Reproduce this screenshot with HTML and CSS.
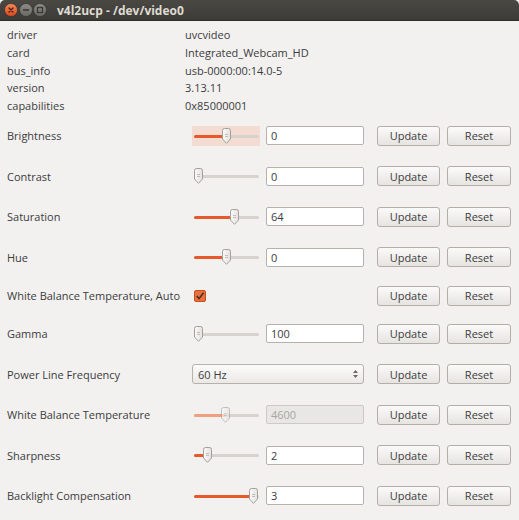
FILE: index.html
```html
<!DOCTYPE html>
<html lang="en">
<head>
    <meta charset="UTF-8">
    <title>v4l2ucp - /dev/video0</title>
    <link rel="stylesheet" href="styles.css">
</head>
<body>
    <div class="window">
        <div class="titlebar">
            <div class="wm-buttons">
                <svg class="wm-btn" width="14" height="14" viewBox="0 0 14 14">
                    <defs>
                        <linearGradient id="gClose" x1="0" y1="0" x2="0" y2="1">
                            <stop offset="0" stop-color="#f68a5c"/>
                            <stop offset="1" stop-color="#d9481a"/>
                        </linearGradient>
                    </defs>
                    <circle cx="7" cy="7" r="6.5" fill="url(#gClose)" stroke="#2c2b28" stroke-width="0.6"/>
                    <path d="M5 5 L9 9 M9 5 L5 9" stroke="#4a2414" stroke-width="1.4" stroke-linecap="round"/>
                </svg>
                <svg class="wm-btn" width="14" height="14" viewBox="0 0 14 14">
                    <defs>
                        <linearGradient id="gGrey" x1="0" y1="0" x2="0" y2="1">
                            <stop offset="0" stop-color="#8e8c86"/>
                            <stop offset="1" stop-color="#6a6863"/>
                        </linearGradient>
                    </defs>
                    <circle cx="7" cy="7" r="6.5" fill="url(#gGrey)" stroke="#2c2b28" stroke-width="0.6"/>
                    <path d="M4 7 H10" stroke="#3a3935" stroke-width="1.6"/>
                </svg>
                <svg class="wm-btn" width="14" height="14" viewBox="0 0 14 14">
                    <circle cx="7" cy="7" r="6.5" fill="url(#gGrey)" stroke="#2c2b28" stroke-width="0.6"/>
                    <rect x="4.5" y="4.5" width="5" height="5" fill="none" stroke="#3a3935" stroke-width="1.3"/>
                </svg>
            </div>
            <span class="title">v4l2ucp - /dev/video0</span>
        </div>

        <div class="content">
            <div class="info">
                <span>driver</span><span>uvcvideo</span>
                <span>card</span><span>Integrated_Webcam_HD</span>
                <span>bus_info</span><span>usb-0000:00:14.0-5</span>
                <span>version</span><span>3.13.11</span>
                <span>capabilities</span><span>0x85000001</span>
            </div>

            <div class="controls">
                <!-- Brightness -->
                <div class="row">
                    <span class="label">Brightness</span>
                    <div class="value">
                        <div class="slider hover">
                            <div class="track"><div class="fill" style="width:32px"></div></div>
                            <svg class="handle" style="left:34px" width="9" height="16" viewBox="0 0 9 16"><use href="#knob"/></svg>
                        </div>
                        <div class="field">0</div>
                    </div>
                    <button class="btn update">Update</button>
                    <button class="btn reset">Reset</button>
                </div>
                <!-- Contrast -->
                <div class="row">
                    <span class="label">Contrast</span>
                    <div class="value">
                        <div class="slider">
                            <div class="track"><div class="fill" style="width:0px"></div></div>
                            <svg class="handle" style="left:6px" width="9" height="16" viewBox="0 0 9 16"><use href="#knob"/></svg>
                        </div>
                        <div class="field">0</div>
                    </div>
                    <button class="btn update">Update</button>
                    <button class="btn reset">Reset</button>
                </div>
                <!-- Saturation -->
                <div class="row">
                    <span class="label">Saturation</span>
                    <div class="value">
                        <div class="slider">
                            <div class="track"><div class="fill" style="width:40px"></div></div>
                            <svg class="handle" style="left:42px" width="9" height="16" viewBox="0 0 9 16"><use href="#knob"/></svg>
                        </div>
                        <div class="field">64</div>
                    </div>
                    <button class="btn update">Update</button>
                    <button class="btn reset">Reset</button>
                </div>
                <!-- Hue -->
                <div class="row">
                    <span class="label">Hue</span>
                    <div class="value">
                        <div class="slider">
                            <div class="track"><div class="fill" style="width:32px"></div></div>
                            <svg class="handle" style="left:34px" width="9" height="16" viewBox="0 0 9 16"><use href="#knob"/></svg>
                        </div>
                        <div class="field">0</div>
                    </div>
                    <button class="btn update">Update</button>
                    <button class="btn reset">Reset</button>
                </div>
                <!-- White Balance Temperature, Auto -->
                <div class="row short">
                    <span class="label">White Balance Temperature, Auto</span>
                    <div class="value">
                        <svg class="check" width="12" height="12" viewBox="0 0 12 12">
                            <rect x="0.5" y="0.5" width="11" height="11" rx="1.5" fill="#e8703d" stroke="#c4521f"/>
                            <path d="M2.8 6 L5 8.6 L9.6 2.8" fill="none" stroke="#4b2a1c" stroke-width="1.5"/>
                        </svg>
                    </div>
                    <button class="btn update">Update</button>
                    <button class="btn reset">Reset</button>
                </div>
                <!-- Gamma -->
                <div class="row">
                    <span class="label">Gamma</span>
                    <div class="value">
                        <div class="slider">
                            <div class="track"><div class="fill" style="width:0px"></div></div>
                            <svg class="handle" style="left:6px" width="9" height="16" viewBox="0 0 9 16"><use href="#knob"/></svg>
                        </div>
                        <div class="field">100</div>
                    </div>
                    <button class="btn update">Update</button>
                    <button class="btn reset">Reset</button>
                </div>
                <!-- Power Line Frequency -->
                <div class="row">
                    <span class="label">Power Line Frequency</span>
                    <div class="value">
                        <div class="combo">
                            <span>60 Hz</span>
                            <svg width="7" height="10" viewBox="0 0 7 10">
                                <path d="M3.5 1 L6 4 H1 Z M3.5 9 L6 6 H1 Z" fill="#6b6964"/>
                            </svg>
                        </div>
                    </div>
                    <button class="btn update">Update</button>
                    <button class="btn reset">Reset</button>
                </div>
                <!-- White Balance Temperature -->
                <div class="row">
                    <span class="label">White Balance Temperature</span>
                    <div class="value">
                        <div class="slider disabled">
                            <div class="track"><div class="fill" style="width:31px"></div></div>
                            <svg class="handle" style="left:33px" width="9" height="16" viewBox="0 0 9 16"><use href="#knob"/></svg>
                        </div>
                        <div class="field disabled">4600</div>
                    </div>
                    <button class="btn update">Update</button>
                    <button class="btn reset">Reset</button>
                </div>
                <!-- Sharpness -->
                <div class="row">
                    <span class="label">Sharpness</span>
                    <div class="value">
                        <div class="slider">
                            <div class="track"><div class="fill" style="width:13px"></div></div>
                            <svg class="handle" style="left:15px" width="9" height="16" viewBox="0 0 9 16"><use href="#knob"/></svg>
                        </div>
                        <div class="field">2</div>
                    </div>
                    <button class="btn update">Update</button>
                    <button class="btn reset">Reset</button>
                </div>
                <!-- Backlight Compensation -->
                <div class="row">
                    <span class="label">Backlight Compensation</span>
                    <div class="value">
                        <div class="slider">
                            <div class="track"><div class="fill" style="width:59px"></div></div>
                            <svg class="handle" style="left:61px" width="9" height="16" viewBox="0 0 9 16"><use href="#knob"/></svg>
                        </div>
                        <div class="field">3</div>
                    </div>
                    <button class="btn update">Update</button>
                    <button class="btn reset">Reset</button>
                </div>
            </div>
        </div>
    </div>

    <!-- shared slider knob -->
    <svg width="0" height="0" class="defs">
        <defs>
            <linearGradient id="gKnob" x1="0" y1="0" x2="1" y2="0">
                <stop offset="0" stop-color="#fbfaf9"/>
                <stop offset="1" stop-color="#e4e2df"/>
            </linearGradient>
            <g id="knob">
                <path d="M0.5 2.5 Q0.5 0.5 2.5 0.5 H6.5 Q8.5 0.5 8.5 2.5 V11 L4.5 15.3 L0.5 11 Z" fill="url(#gKnob)" stroke="#a29f99"/>
                <path d="M3 6.5 H6 M3 8.5 H6" stroke="#b3b0ab" stroke-width="0.8"/>
            </g>
        </defs>
    </svg>
</body>
</html>
```

FILE: styles.css
```css
body {
    margin: 0;
    font-family: "Open Sans", "DejaVu Sans", sans-serif;
    font-size: 11px;
    color: #3c3c3c;
    background-color: #f2f1f0;
}
.window {
    width: 519px;
    height: 520px;
    background-color: #f2f1f0;
    overflow: hidden;
}
.titlebar {
    height: 21px;
    display: flex;
    align-items: center;
    background: linear-gradient(#4a4843, #3c3b37);
    border-radius: 5px 5px 0 0;
    border-bottom: 1px solid #2e2d2a;
    box-sizing: border-box;
}
.wm-buttons {
    display: flex;
    padding-left: 4px;
    width: 52px;
}
.wm-btn {
    display: block;
    margin-right: 0.5px;
}
.title {
    color: #dfdbd2;
    font-weight: bold;
    font-size: 12px;
    margin-left: 1px;
}
.content {
    padding: 0 8px 0 7px;
}
.info {
    display: grid;
    grid-template-columns: 178px 1fr;
    grid-auto-rows: 17.75px;
    line-height: 17.75px;
    padding-top: 5px;
}
.controls {
    display: flex;
    flex-direction: column;
    gap: 20.5px;
    margin-top: 11px;
}
.row {
    display: grid;
    grid-template-columns: 185px 172px 76px 71px;
    height: 20px;
    align-items: center;
}
.row.short {
    margin-top: -2px;
    margin-bottom: -2.5px;
}
.value {
    display: flex;
    align-items: center;
    gap: 6px;
    height: 20px;
}
.slider {
    position: relative;
    width: 68px;
    height: 20px;
    flex: none;
}
.slider.hover {
    background-color: #f4dcd2;
}
.track {
    position: absolute;
    left: 2px;
    right: 1px;
    top: 9px;
    height: 3px;
    border-radius: 2px;
    background-color: #d6d3cf;
    overflow: hidden;
}
.fill {
    height: 100%;
    background-color: #e8592a;
}
.handle {
    position: absolute;
    top: 2px;
    margin-left: -4px;
}
.slider.disabled .fill {
    background-color: #f0a07e;
}
.slider.disabled .handle {
    opacity: 0.6;
}
.field {
    width: 98px;
    height: 19px;
    box-sizing: border-box;
    background-color: #fff;
    border: 1px solid #b6b2ab;
    border-radius: 2px;
    padding-left: 4px;
    line-height: 17px;
}
.field.disabled {
    background-color: #e8e7e5;
    border-color: #cdcac5;
    color: #a7a5a1;
}
.check {
    display: block;
    margin-left: 2px;
}
.combo {
    width: 172px;
    height: 20px;
    box-sizing: border-box;
    display: flex;
    align-items: center;
    justify-content: space-between;
    padding: 0 4px 0 5px;
    border: 1px solid #b6b2ab;
    border-radius: 3px;
    background: linear-gradient(#fcfbfb, #ebe9e6);
}
.btn {
    justify-self: end;
    height: 20px;
    font-family: inherit;
    font-size: 11px;
    color: #3c3c3c;
    border: 1px solid #b3afa8;
    border-radius: 3px;
    background: linear-gradient(#fbfafa, #e6e4e1);
    padding: 0;
}
.btn.update {
    width: 63px;
}
.btn.reset {
    width: 64px;
}
.defs {
    position: absolute;
}
```
